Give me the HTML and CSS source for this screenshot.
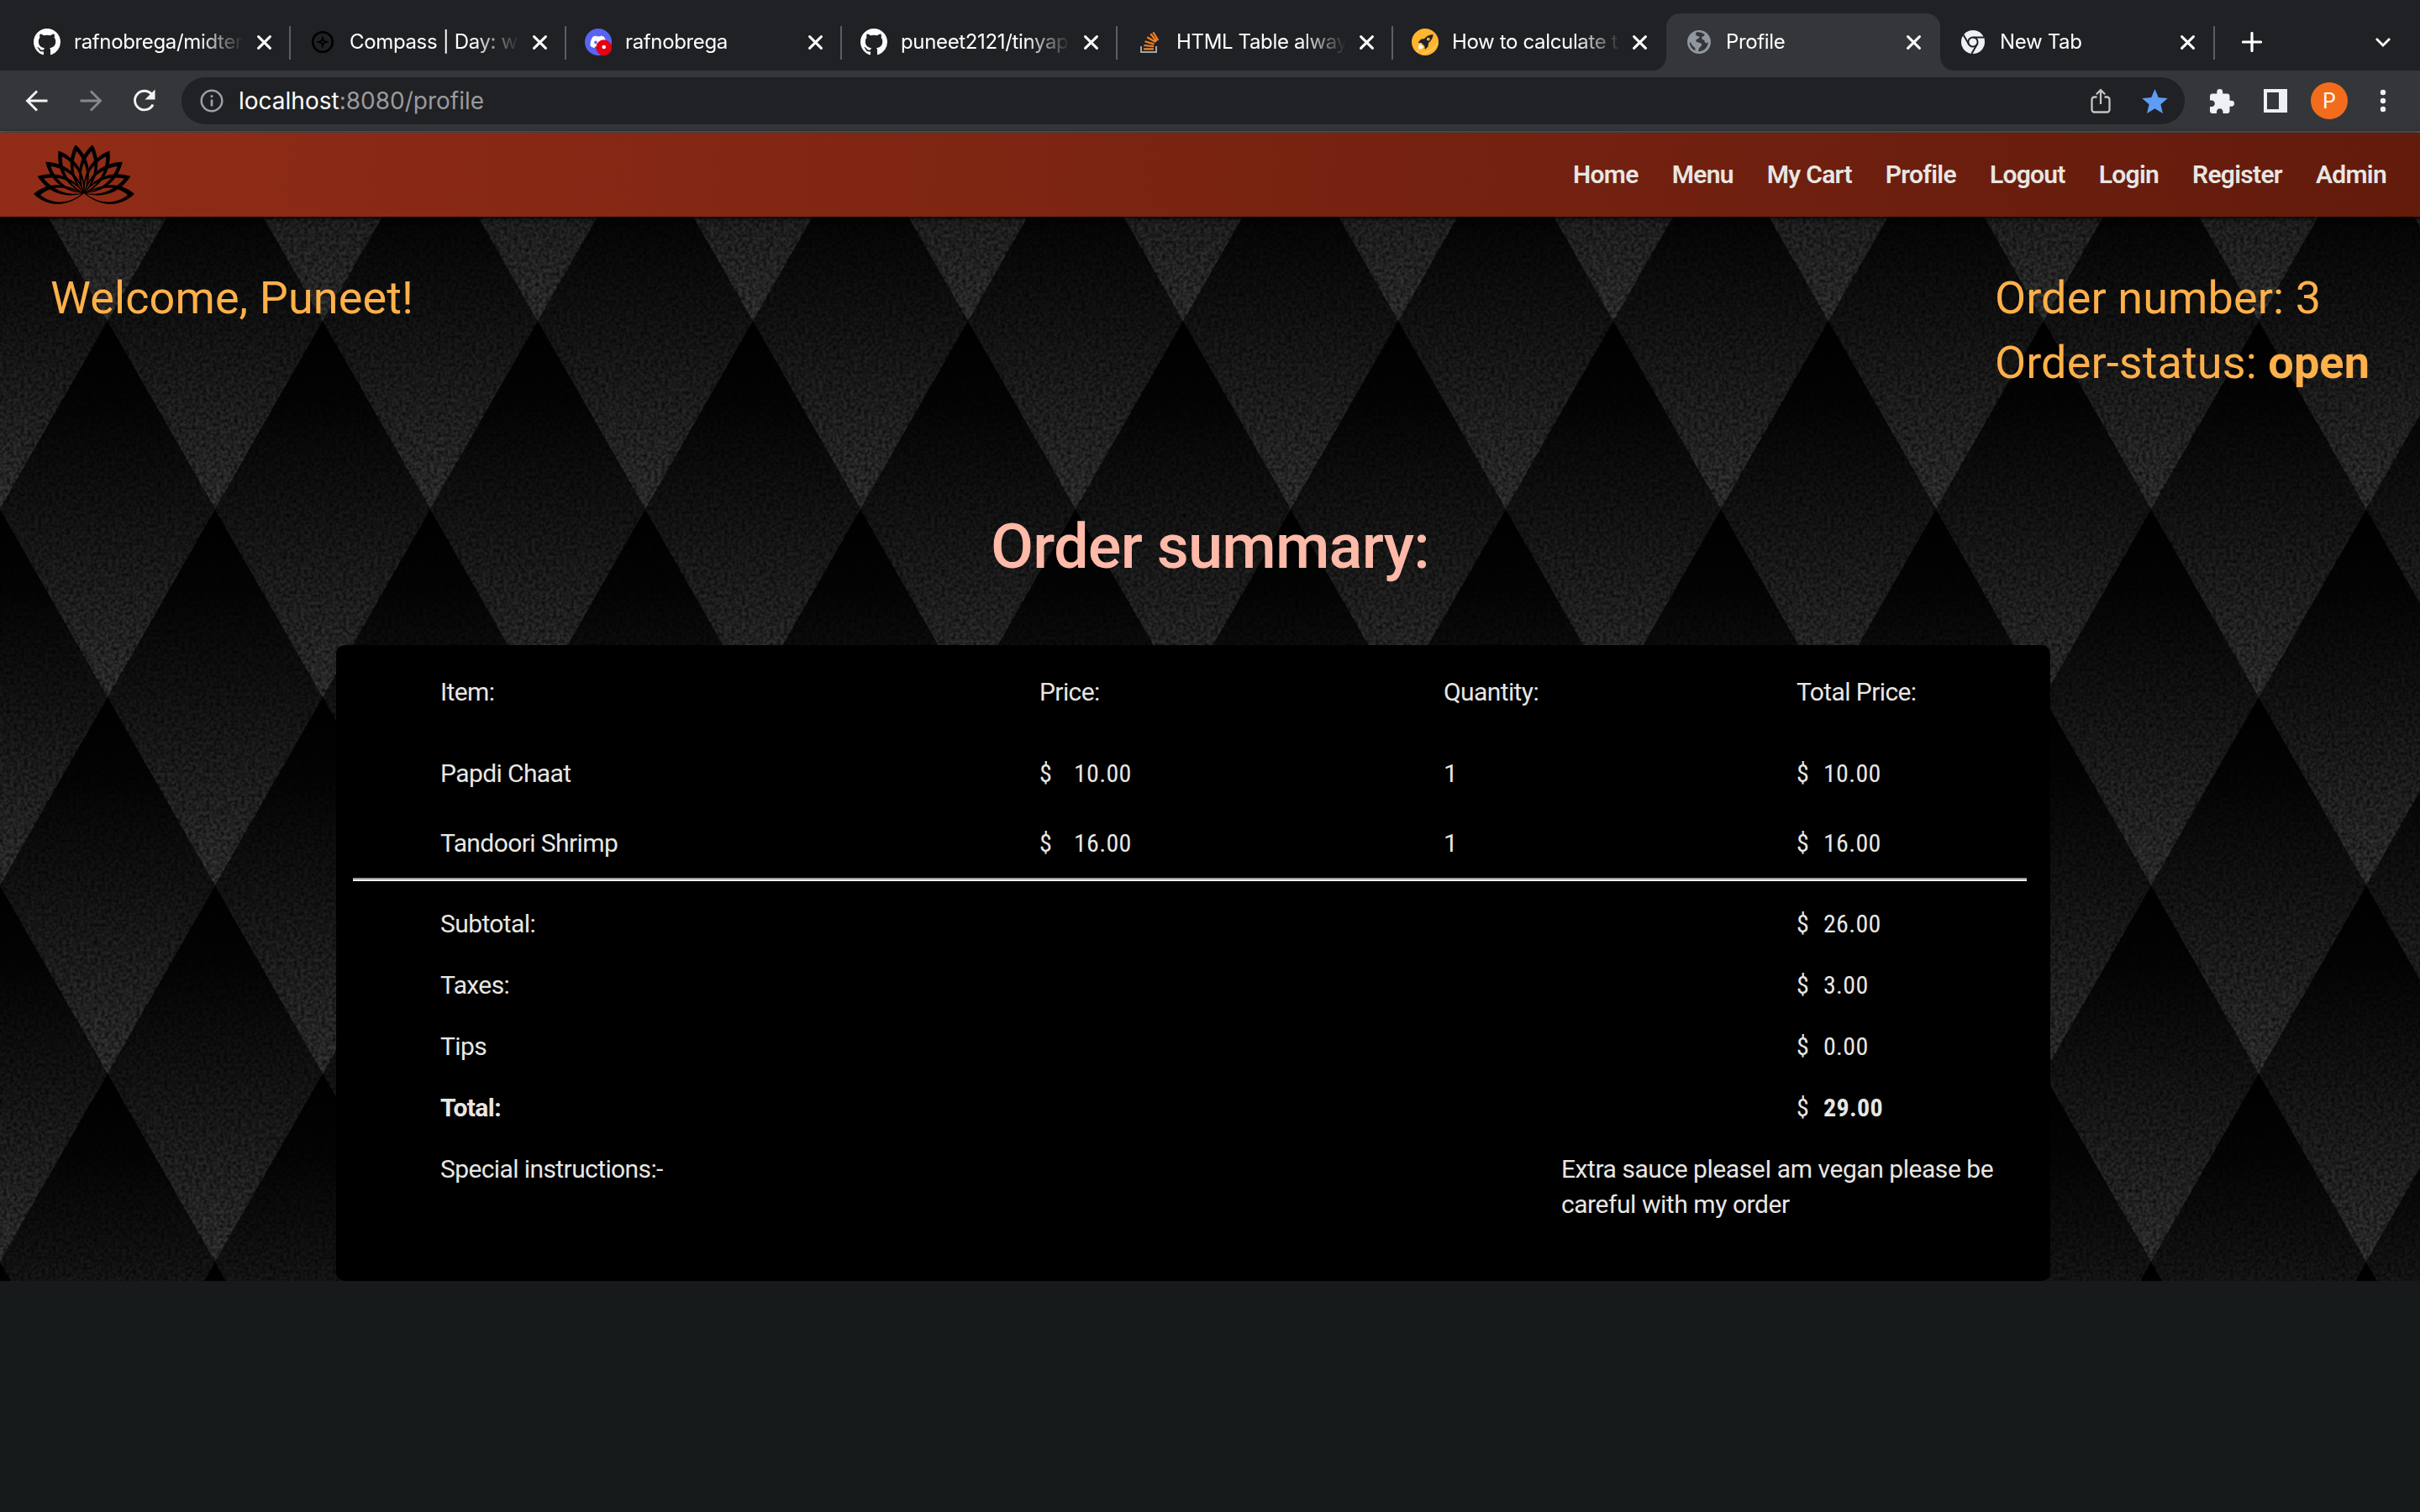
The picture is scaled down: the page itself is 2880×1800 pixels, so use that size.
FILE: index.html
```
<!DOCTYPE html>
<html lang="en">
<head>
<meta charset="utf-8">
<title>Profile</title>
<link rel="stylesheet" href="styles.css">
</head>
<body>
<svg class="defs" width="0" height="0" aria-hidden="true">
  <symbol id="x" viewBox="0 0 16 16"><path d="M1.5 1.500l13 13M14.500 1.500l-13 13" fill="none" stroke="#fff" stroke-width="2.800" stroke-linecap="round"/></symbol>
  <symbol id="github" viewBox="0 0 16 16"><path fill="#fff" d="M8 0C3.58 0 0 3.58 0 8c0 3.540 2.290 6.530 5.470 7.590.4.070.55-.17.55-.38 0-.19-.01-.82-.01-1.490-2.010.37-2.530-.49-2.690-.94-.09-.23-.48-.94-.82-1.130-.28-.15-.68-.52-.01-.53.63-.01 1.080.58 1.230.82.72 1.210 1.870.87 2.330.66.07-.52.28-.87.51-1.070-1.780-.2-3.640-.89-3.640-3.950 0-.87.31-1.590.82-2.150-.08-.2-.36-1.020.08-2.120 0 0 .67-.21 2.200.82.64-.18 1.320-.27 2-.27s1.360.09 2 .27c1.530-1.040 2.200-.82 2.200-.82.44 1.100.16 1.920.08 2.120.51.56.82 1.270.82 2.150 0 3.070-1.870 3.750-3.650 3.950.29.25.54.73.54 1.480 0 1.070-.01 1.930-.01 2.200 0 .21.15.46.55.38A8.010 8.010 0 0 0 16 8c0-4.420-3.580-8-8-8z"/></symbol>
  <symbol id="petal" viewBox="-20 -60 40 60" overflow="visible"><path fill-rule="evenodd" d="M0 0C-11-14-17-37 0-59C17-37 11-14 0 0ZM0-1C-9-15-10.500-34 0-51C10.500-34 9-15 0-1Z"/></symbol>
</svg>

<header class="browser">
  <div class="tabs">
    <div class="tab"><svg class="fav"><use href="#github"/></svg><span class="tab-title">rafnobrega/midterm</span><svg class="close"><use href="#x"/></svg></div>
    <div class="tab"><svg class="fav" viewBox="0 0 32 32"><circle cx="16" cy="16" r="11.800" fill="none" stroke="#000" stroke-width="2.600"/><path d="M16 8l2 6 6 2-6 2-2 6-2-6-6-2 6-2z"/><circle cx="16" cy="16" r="1.300" fill="#202124"/></svg><span class="tab-title">Compass | Day: w10</span><svg class="close"><use href="#x"/></svg></div>
    <div class="tab"><svg class="fav" viewBox="0 0 32 32"><circle cx="16" cy="16" r="16" fill="#5865f2"/><path fill="#fff" transform="translate(6.500 6.200) scale(.8)" d="M20.317 4.370a19.800 19.800 0 0 0-4.885-1.515l-.64 1.250a18.300 18.300 0 0 0-5.500 0l-.64-1.250a19.700 19.700 0 0 0-4.885 1.515C.53 9.046-.32 13.580.1 18.058a19.900 19.900 0 0 0 5.993 3.030l1.226-1.994-1.872-.892c4 1.900 9.100 1.900 13.100 0l-1.873.892 1.225 1.993a19.800 19.800 0 0 0 6.002-3.030c.5-5.177-.838-9.674-3.584-13.687zM8.020 15.330c-1.180 0-2.157-1.085-2.157-2.419s.956-2.419 2.157-2.419 2.176 1.086 2.157 2.419c0 1.334-.956 2.419-2.157 2.419zm7.975 0c-1.183 0-2.157-1.085-2.157-2.419s.955-2.419 2.157-2.419 2.176 1.086 2.157 2.419c0 1.334-.946 2.419-2.157 2.419z"/><circle cx="22.700" cy="22.700" r="9.400" fill="#e60012"/><circle cx="22.700" cy="22" r="2.300" fill="#fff"/></svg><span class="tab-title">rafnobrega</span><svg class="close"><use href="#x"/></svg></div>
    <div class="tab"><svg class="fav"><use href="#github"/></svg><span class="tab-title">puneet2121/tinyapp</span><svg class="close"><use href="#x"/></svg></div>
    <div class="tab"><svg class="fav" viewBox="0 0 32 32"><path d="M6 21v7h18v-7" fill="none" stroke="#9fa6ab" stroke-width="2"/><path d="M9 24.300h12M9.400 20l11.800 1.200M10.500 15.200l11 3.300M13.200 10.200l10 5.800M17.300 6.200l7.200 9M20.300 4.300l6 9.700" fill="none" stroke="#f48024" stroke-width="2.200"/></svg><span class="tab-title">HTML Table always</span><svg class="close"><use href="#x"/></svg></div>
    <div class="tab plain"><svg class="fav" viewBox="0 0 32 32"><circle cx="16" cy="16" r="16" fill="#ffb52e"/><path d="M25.500 7c-4.500.3-8 2-10.300 5l-4.200.7-3.500 4 4 .2 3.800 3.800.5 4.300 3.700-3.500.6-4.300C23.500 14.500 25.300 11 25.500 7z" fill="#20222a"/><circle cx="19.800" cy="12.600" r="1.900" fill="#ffb52e"/><path d="M10.300 18.300l4 4-3 2.200-3-.6-.3-2.800z" fill="#fff"/><path d="M6 28c2-2 2-3 3-4M13 30c9-3 15-7 18-13" fill="none" stroke="#ffe0a0"/></svg><span class="tab-title">How to calculate t</span><svg class="close"><use href="#x"/></svg></div>
    <div class="tab active"><svg class="fav small" viewBox="2 2 20 20"><path fill="#8f989e" d="M12 2C6.480 2 2 6.480 2 12s4.480 10 10 10 10-4.480 10-10S17.520 2 12 2z"/><path fill="#35363a" d="M9.500 3.800c-1 2.700.7 3.200 2.900 3.500 0 2.200-2.600 1.600-3 3.400-.2 1.400 1.800 1.500 3 1.900 2.200.7 2.500 2.300 1 3.300-1.500.9-1.600 2.200-2.100 4.100 4.700.2 8.400-3.500 8.500-8-1.800 1.800-3 .7-3.100-.9-.1-1.300-2.600-.7-2.400-2.600.1-1.300 2.200-1 2.500-2.700-2-1.700-4.500-2.600-7.300-2zM4 12.200c0 3.300 1.900 5.900 4.700 7.100.6-2-.4-2.900-1.900-3.800-1.100-.7-.7-2.500-2.800-3.300z"/></svg><span class="tab-title">Profile</span><svg class="close"><use href="#x"/></svg></div>
    <div class="tab"><svg class="fav small" viewBox="0 0 28 28"><circle cx="14" cy="14" r="14" fill="#eef1f3"/><circle cx="14" cy="14" r="5.600" fill="none" stroke="#202124" stroke-width="2"/><path d="M14 8.400h13M9.100 16.800L2.600 5.600M18.900 16.800L12.400 28" fill="none" stroke="#202124" stroke-width="2"/></svg><span class="tab-title">New Tab</span><svg class="close"><use href="#x"/></svg></div>
    <svg class="plus" viewBox="0 0 24 24"><path d="M12 1.500v21M1.500 12h21" stroke="#fff" stroke-width="3.200" stroke-linecap="round"/></svg>
    <svg class="chevron" viewBox="0 0 20 12"><path d="M2 2l8 8 8-8" fill="none" stroke="#fff" stroke-width="2.800"/></svg>
  </div>
  <div class="toolbar">
    <svg class="tool" viewBox="0 0 32 32"><path d="M28.500 16H5M16 4.500L4.500 16 16 27.500" fill="none" stroke="#f1f3f4" stroke-width="2.900"/></svg>
    <svg class="tool" viewBox="0 0 32 32"><path d="M3.500 16H27M16 4.500L27.500 16 16 27.500" fill="none" stroke="#85878a" stroke-width="2.900"/></svg>
    <svg class="tool" viewBox="0 0 32 32"><path d="M26 20.500A11.300 11.300 0 1 1 24.500 8.300" fill="none" stroke="#f1f3f4" stroke-width="2.900"/><path d="M28.500 2.500v12h-12z" fill="#f1f3f4"/></svg>
    <div class="omnibox">
      <svg class="info" viewBox="0 0 28 28"><circle cx="14" cy="14" r="12.300" fill="none" stroke="#9aa0a6" stroke-width="2.500"/><path d="M14 12.500v8M14 7.300v2.700" stroke="#9aa0a6" stroke-width="2.700"/></svg>
      <span class="url">localhost<span class="path">:8080/profile</span></span>
      <svg class="share" viewBox="0 0 24 30"><path d="M7.500 10.500H4.500a3 3 0 0 0-3 3v12a3 3 0 0 0 3 3h15a3 3 0 0 0 3-3v-12a3 3 0 0 0-3-3h-3M12 19V3M6.800 7.300L12 2.100l5.200 5.200" fill="none" stroke="#c4c4c4" stroke-width="2.300"/></svg>
      <svg class="star" viewBox="2 2 20 19"><path fill="#5e9cf5" d="M12 17.270L18.180 21l-1.640-7.030L22 9.240l-7.190-.61L12 2 9.190 8.630 2 9.240l5.460 4.730L5.820 21z"/></svg>
    </div>
    <svg class="puzzle" viewBox="2 1 21 21"><path fill="#eef1f3" d="M20.500 11H19V7c0-1.100-.9-2-2-2h-4V3.500a2.500 2.500 0 0 0-5 0V5H4c-1.100 0-1.990.9-1.990 2v3.800H3.500c1.490 0 2.700 1.210 2.700 2.700s-1.210 2.700-2.700 2.700H2V20c0 1.100.9 2 2 2h3.800v-1.500c0-1.490 1.210-2.700 2.700-2.700s2.700 1.210 2.700 2.700V22H17c1.100 0 2-.9 2-2v-4h1.500a2.500 2.500 0 0 0 0-5z"/></svg>
    <svg class="panel" viewBox="0 0 28 28"><path fill="#eef1f3" fill-rule="evenodd" d="M0 0h28v28H0zM4 4v20h14V4z"/></svg>
    <span class="avatar">P</span>
    <svg class="dots" viewBox="0 0 8 28"><g fill="#eef1f3"><circle cx="4" cy="4" r="3.200"/><circle cx="4" cy="14" r="3.200"/><circle cx="4" cy="24" r="3.200"/></g></svg>
  </div>
</header>

<nav class="navbar">
  <svg class="lotus" viewBox="0 0 120 70">
    <g transform="translate(60 57)">
      <g id="half">
        <use href="#petal" x="-20" y="-60" width="40" height="60" transform="rotate(-10)"/>
        <use href="#petal" x="-20" y="-60" width="40" height="60" transform="rotate(-31)"/>
        <use href="#petal" x="-20" y="-60" width="40" height="60" transform="rotate(-51)"/>
        <use href="#petal" x="-20" y="-60" width="40" height="60" transform="rotate(-70)"/>
        <path fill-rule="evenodd" d="M0 0C-24-12-42-14-60 1C-42 18-18 16 0 0ZM-2 0C-20-8-38-10-52 2C-38 14-16 13-2 0Z"/>
      </g>
      <use href="#half" transform="scale(-1 1)"/>
    </g>
  </svg>
  <div class="links">
    <a>Home</a><a>Menu</a><a>My Cart</a><a>Profile</a><a>Logout</a><a>Login</a><a>Register</a><a>Admin</a>
  </div>
</nav>

<main class="page">
  <svg class="backdrop" width="2880" height="1267">
    <defs>
      <linearGradient id="shade" x1="0" y1="0" x2="0" y2="1"><stop offset="0" stop-color="#000"/><stop offset=".22" stop-color="#050505"/><stop offset=".5" stop-color="#161616"/><stop offset="1" stop-color="#383838"/></linearGradient>
      <pattern id="argyle" width="256" height="448" patternUnits="userSpaceOnUse" patternTransform="translate(0 -100)">
        <g fill="url(#shade)">
          <path d="M0 0L128 224 0 448-128 224z"/><path d="M256 0L384 224 256 448 128 224z"/>
          <path d="M128-224L256 0 128 224 0 0z"/><path d="M128 224L256 448 128 672 0 448z"/>
        </g>
      </pattern>
      <filter id="grain" x="0" y="0" width="100%" height="100%" color-interpolation-filters="sRGB">
        <feTurbulence type="fractalNoise" baseFrequency=".24" numOctaves="2" seed="4"/>
        <feColorMatrix values="0 0 0 0 0  0 0 0 0 0  0 0 0 0 0  1.300 0 0 0 -.38"/>
      </filter>
    </defs>
    <rect width="2880" height="1267" fill="url(#argyle)"/>
    <rect width="2880" height="1267" filter="url(#grain)"/>
  </svg>
  <section class="intro">
    <p>Welcome, Puneet!</p>
    <div><p>Order number: 3</p><p>Order-status: <b>open</b></p></div>
  </section>
  <h1>Order summary:</h1>
  <section class="card">
    <div class="row head"><span>Item:</span><span>Price:</span><span>Quantity:</span><span>Total Price:</span></div>
    <div class="row item"><span>Papdi Chaat</span><span class="money wide"><i>$</i>10.00</span><span>1</span><span class="money"><i>$</i>10.00</span></div>
    <div class="row item"><span>Tandoori Shrimp</span><span class="money wide"><i>$</i>16.00</span><span>1</span><span class="money"><i>$</i>16.00</span></div>
    <div class="rule"></div>
    <div class="row sum"><span>Subtotal:</span><span class="money"><i>$</i>26.00</span></div>
    <div class="row sum"><span>Taxes:</span><span class="money"><i>$</i>3.00</span></div>
    <div class="row sum"><span>Tips</span><span class="money"><i>$</i>0.00</span></div>
    <div class="row sum"><b>Total:</b><span class="money"><i>$</i><b>29.00</b></span></div>
    <div class="row note"><span>Special instructions:-</span><p>Extra sauce pleaseI am vegan please be careful with my order</p></div>
  </section>
</main>
</body>
</html>
```
FILE: styles.css
```
* { box-sizing: border-box; }
body { margin: 0; background: #171a1b; color: #e8e6e3; font-family: Roboto, sans-serif; }
p, h1 { margin: 0; }
svg { display: block; flex: none; }
.defs { position: absolute; }

/* Browser window */
.browser { font-family: Inter, sans-serif; background: #202124; }
.tabs { display: flex; align-items: center; height: 84px; padding: 16px 32px 0 17px; }
.tab { position: relative; display: flex; align-items: center; width: 328px; height: 68px; padding-left: 23px; flex: none; }
.tab:nth-child(n+6) { width: 326px; }
.tab::after { content: ""; position: absolute; right: -1px; top: 15px; width: 2px; height: 40px; background: #5c5e62; }
.tab.plain::after { display: none; }
.fav { width: 32px; height: 32px; }
.fav.small { width: 28px; height: 28px; margin: 0 2px; }
.tab-title { width: 201px; margin-left: 16px; overflow: hidden; white-space: nowrap; color: #fff; font-size: 24px; line-height: 32px; letter-spacing: -.35px; mask-image: linear-gradient(90deg, #000 148px, transparent 202px); }
.tab:nth-child(n+6) .tab-title { width: 198px; }
.close { width: 17px; height: 17px; margin-left: 17px; }
.tab.active { background: #35363a; border-radius: 16px 16px 0 0; }
.tab.active::before, .tab.active::after { content: ""; position: absolute; display: block; top: auto; bottom: 0; width: 16px; height: 16px; }
.tab.active::before { left: -16px; background: radial-gradient(circle at 0 0, transparent 15.500px, #35363a 16px); }
.tab.active::after { right: -16px; background: radial-gradient(circle at 100% 0, transparent 15.500px, #35363a 16px); }
.plus { width: 24px; height: 24px; margin-left: 33px; }
.chevron { width: 20px; height: 12px; margin-left: auto; margin-right: 2px; }

.toolbar { display: flex; align-items: center; height: 74px; padding: 0 40px 0 28px; background: #35363a; border-bottom: 2px solid #5f6064; }
.tool { width: 32px; height: 32px; margin-right: 32px; }
.omnibox { display: flex; align-items: center; width: 2384px; height: 56px; padding: 0 20px 0 22px; border-radius: 28px; background: #202124; margin-left: -4px; }
.info { width: 28px; height: 28px; }
.url { margin: 0 auto 0 18px; font-size: 28px; color: #fff; }
.path { color: #9a9b9d; }
.share { width: 24px; height: 30px; margin-right: 37px; }
.star { width: 31px; height: 29px; }
.puzzle { width: 29px; height: 29px; margin-left: 30px; }
.panel { width: 28px; height: 28px; margin-left: 35px; }
.avatar { display: grid; place-items: center; width: 44px; height: 44px; margin-left: 28px; border-radius: 50%; background: #f36c1c; color: #fff; font-size: 25px; }
.dots { width: 8px; height: 28px; margin-left: auto; }

/* Site header */
.navbar { position: relative; display: flex; align-items: center; justify-content: space-between; height: 100px; padding: 0 40px; background: linear-gradient(95deg, #912c17, #631b0c); box-shadow: 0 1px 6px #000; z-index: 1; }
.lotus { width: 120px; height: 70px; }
.links { display: flex; gap: 40px; padding-bottom: 1px; font-size: 30px; font-weight: 600; letter-spacing: -.7px; }

/* Order page */
.page { position: relative; height: 1267px; padding-top: 58px; }
.backdrop { position: absolute; inset: 0; z-index: -1; }
.intro { display: flex; justify-content: space-between; height: 250px; padding: 0 60px; font-size: 54px; font-weight: 400; line-height: 77px; letter-spacing: .1px; color: #ffb04a; }
.intro b { font-weight: 700; }
h1 { height: 202px; padding-top: 42px; text-align: center; color: #ffb9a8; font-size: 74px; font-weight: 500; line-height: 86px; letter-spacing: -.8px; }
.card { width: 2040px; height: 757px; margin-left: 400px; border-radius: 10px; background: #000; font-size: 30px; font-weight: 400; letter-spacing: -.6px; }
.row { display: grid; grid-template-columns: 713px 481px 420px 1fr; align-items: center; padding-left: 124px; }
.head { height: 110px; margin-bottom: 1px; }
.item { height: 83px; }
.money { font-stretch: 75%; letter-spacing: .3px; }
.money i { display: inline-block; width: 32px; font-style: normal; }
.wide i { width: 41px; }
.rule { height: 4px; margin: 0 28px 14px 20px; background: linear-gradient(#989898 50%, #f0f0ee 50%); }
.sum { grid-template-columns: 1614px 1fr; height: 73px; }
.note { grid-template-columns: 1334px 540px; align-items: start; padding-top: 16px; line-height: 42px; }
.note p { letter-spacing: -.45px; }
```
